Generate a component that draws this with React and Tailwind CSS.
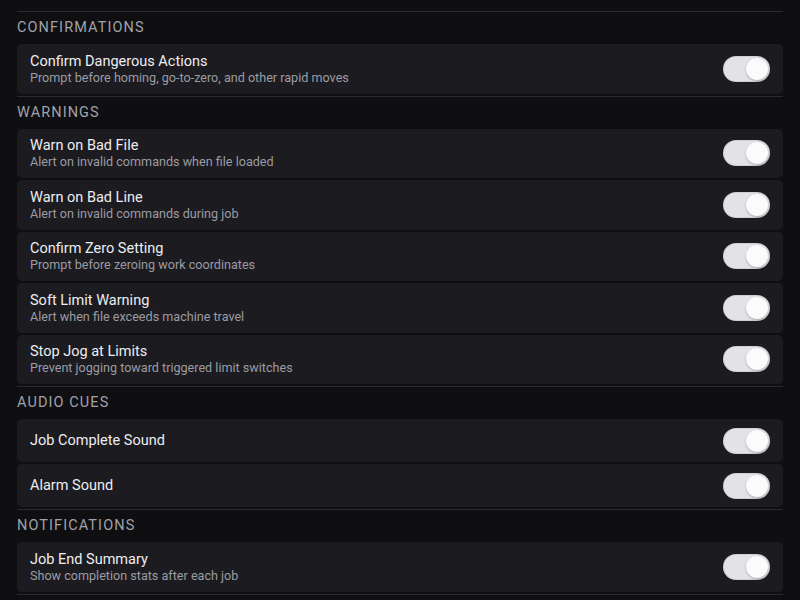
import React from "react";

const sections = [
  {
    title: "Confirmations",
    items: [
      { t: "Confirm Dangerous Actions", s: "Prompt before homing, go-to-zero, and other rapid moves" },
    ],
  },
  {
    title: "Warnings",
    items: [
      { t: "Warn on Bad File", s: "Alert on invalid commands when file loaded" },
      { t: "Warn on Bad Line", s: "Alert on invalid commands during job" },
      { t: "Confirm Zero Setting", s: "Prompt before zeroing work coordinates" },
      { t: "Soft Limit Warning", s: "Alert when file exceeds machine travel" },
      { t: "Stop Jog at Limits", s: "Prevent jogging toward triggered limit switches" },
    ],
  },
  {
    title: "Audio Cues",
    items: [{ t: "Job Complete Sound" }, { t: "Alarm Sound" }],
  },
  {
    title: "Notifications",
    items: [{ t: "Job End Summary", s: "Show completion stats after each job" }],
  },
];

function Toggle() {
  return (
    <div className="w-[47px] h-[26px] rounded-full bg-[#e2e2e7] flex items-center justify-end p-[2px] shadow-[inset_0_0_0_1px_rgba(0,0,0,0.08)]">
      <div className="w-[22px] h-[22px] rounded-full bg-[#fbfbfc] shadow-[0_1px_2px_rgba(0,0,0,0.25)]" />
    </div>
  );
}

function Row({ t, s }) {
  return (
    <div
      className={
        "flex items-center justify-between rounded-[5px] bg-[#1c1c20] px-[13px] " +
        (s ? "h-[49.5px]" : "h-[43px]")
      }
    >
      <div className="flex flex-col">
        <div className="text-[14.5px] leading-[17px] text-[#ededf0]">{t}</div>
        {s && <div className="text-[12.6px] leading-[15px] text-[#9b9ba3]">{s}</div>}
      </div>
      <Toggle />
    </div>
  );
}

export default function App() {
  return (
    <div
      className="w-[800px] h-[600px] overflow-hidden bg-[#0f0f12] px-[17px]"
      style={{ fontFamily: "Roboto, 'Liberation Sans', sans-serif" }}
    >
      <div className="h-[12px] border-b border-[#2a2a2f]" />
      {sections.map((sec) => (
        <div key={sec.title} className="flex flex-col border-b border-[#2a2a2f] pb-[2px]">
          <div className="h-[32px] flex items-center text-[14.5px] uppercase tracking-[0.075em] text-[#a1a1a9]">
            {sec.title}
          </div>
          <div className="flex flex-col gap-[2px]">
            {sec.items.map((it) => (
              <Row key={it.t} {...it} />
            ))}
          </div>
        </div>
      ))}
    </div>
  );
}
